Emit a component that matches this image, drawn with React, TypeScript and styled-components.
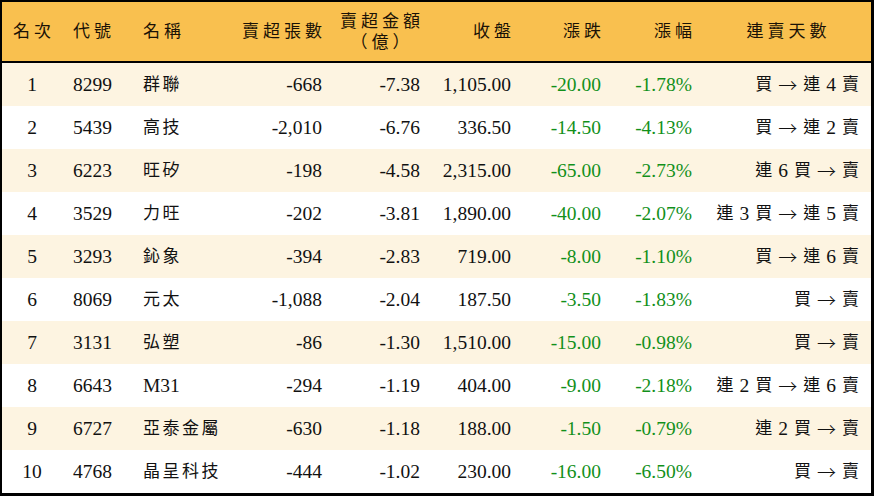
import styled, { createGlobalStyle } from 'styled-components';

const GlobalStyle = createGlobalStyle`
  html, body {
    margin: 0;
    padding: 0;
    background: #fff;
  }
  body {
    font-family: "Liberation Serif", "Noto Sans CJK TC", serif;
  }
`;

type Align = 'left' | 'center' | 'right';

interface Row {
  rank: number;
  code: string;
  name: string;
  lots: string;
  amount: string;
  close: string;
  change: string;
  pct: string;
  streak: string;
}

const rows: Row[] = [
  { rank: 1, code: '8299', name: '群聯', lots: '-668', amount: '-7.38', close: '1,105.00', change: '-20.00', pct: '-1.78%', streak: '買 → 連 4 賣' },
  { rank: 2, code: '5439', name: '高技', lots: '-2,010', amount: '-6.76', close: '336.50', change: '-14.50', pct: '-4.13%', streak: '買 → 連 2 賣' },
  { rank: 3, code: '6223', name: '旺矽', lots: '-198', amount: '-4.58', close: '2,315.00', change: '-65.00', pct: '-2.73%', streak: '連 6 買 → 賣' },
  { rank: 4, code: '3529', name: '力旺', lots: '-202', amount: '-3.81', close: '1,890.00', change: '-40.00', pct: '-2.07%', streak: '連 3 買 → 連 5 賣' },
  { rank: 5, code: '3293', name: '鈊象', lots: '-394', amount: '-2.83', close: '719.00', change: '-8.00', pct: '-1.10%', streak: '買 → 連 6 賣' },
  { rank: 6, code: '8069', name: '元太', lots: '-1,088', amount: '-2.04', close: '187.50', change: '-3.50', pct: '-1.83%', streak: '買 → 賣' },
  { rank: 7, code: '3131', name: '弘塑', lots: '-86', amount: '-1.30', close: '1,510.00', change: '-15.00', pct: '-0.98%', streak: '買 → 賣' },
  { rank: 8, code: '6643', name: 'M31', lots: '-294', amount: '-1.19', close: '404.00', change: '-9.00', pct: '-2.18%', streak: '連 2 買 → 連 6 賣' },
  { rank: 9, code: '6727', name: '亞泰金屬', lots: '-630', amount: '-1.18', close: '188.00', change: '-1.50', pct: '-0.79%', streak: '連 2 買 → 賣' },
  { rank: 10, code: '4768', name: '晶呈科技', lots: '-444', amount: '-1.02', close: '230.00', change: '-16.00', pct: '-6.50%', streak: '買 → 賣' },
];

// widths of each column, the last one takes what is left
const cols: { width?: number; pad: string }[] = [
  { width: 60, pad: '0' },
  { width: 71, pad: '0 0 0 11px' },
  { width: 104, pad: '0 0 0 10px' },
  { width: 95, pad: '0 10px 0 0' },
  { width: 98, pad: '0 10px 0 0' },
  { width: 91, pad: '0 10px 0 0' },
  { width: 90, pad: '0 10px 0 0' },
  { width: 91, pad: '0 10px 0 0' },
  { pad: '0 12px 0 0' },
];

const hasCjk = (s: string) => /[\u4e00-\u9fff]/.test(s);

function StreakCell({ text }: { text: string }) {
  return (
    <Streak>
      {text.split(' ').map((t, i) =>
        t === '→' ? (
          <Arrow key={i}>→</Arrow>
        ) : hasCjk(t) ? (
          <StreakChar key={i}>{t}</StreakChar>
        ) : (
          <StreakNum key={i}>{t}</StreakNum>
        ),
      )}
    </Streak>
  );
}

export default function App() {
  return (
    <>
      <GlobalStyle />
      <Frame>
        <Table>
          <colgroup>
            {cols.map((c, i) => (
              <col key={i} style={c.width ? { width: c.width } : undefined} />
            ))}
          </colgroup>
          <thead>
            <tr>
              <Th $align="center">
                <Cjk>名次</Cjk>
              </Th>
              <Th $align="left" $pad={cols[1].pad}>
                <Cjk>代號</Cjk>
              </Th>
              <Th $align="left" $pad={cols[2].pad}>
                <Cjk>名稱</Cjk>
              </Th>
              <Th $align="right" $pad={cols[3].pad}>
                <Cjk>賣超張數</Cjk>
              </Th>
              <Th $align="right" $pad={cols[4].pad}>
                <TwoLine>
                  <Cjk>賣超金額</Cjk>
                  <Cjk>（億）</Cjk>
                </TwoLine>
              </Th>
              <Th $align="right" $pad={cols[5].pad}>
                <Cjk>收盤</Cjk>
              </Th>
              <Th $align="right" $pad={cols[6].pad}>
                <Cjk>漲跌</Cjk>
              </Th>
              <Th $align="right" $pad={cols[7].pad}>
                <Cjk>漲幅</Cjk>
              </Th>
              <Th $align="center">
                <Cjk>連賣天數</Cjk>
              </Th>
            </tr>
          </thead>
          <tbody>
            {rows.map((r) => (
              <Tr key={r.rank} $odd={r.rank % 2 === 1}>
                <Td $align="center">{r.rank}</Td>
                <Td $align="left" $pad={cols[1].pad}>{r.code}</Td>
                <Td $align="left" $pad={cols[2].pad}>
                  {hasCjk(r.name) ? <Name>{r.name}</Name> : r.name}
                </Td>
                <Td $align="right" $pad={cols[3].pad}>{r.lots}</Td>
                <Td $align="right" $pad={cols[4].pad}>{r.amount}</Td>
                <Td $align="right" $pad={cols[5].pad}>{r.close}</Td>
                <Td $align="right" $pad={cols[6].pad} $green>{r.change}</Td>
                <Td $align="right" $pad={cols[7].pad} $green>{r.pct}</Td>
                <Td $align="right" $pad={cols[8].pad}>
                  <StreakCell text={r.streak} />
                </Td>
              </Tr>
            ))}
          </tbody>
        </Table>
      </Frame>
    </>
  );
}

const Frame = styled.div`
  width: 874px;
  height: 496px;
  box-sizing: border-box;
  border-style: solid;
  border-color: #000;
  border-width: 2px 3px 3px 2px;
  background: #fff;
  overflow: hidden;
`;

const Table = styled.table`
  width: 100%;
  border-collapse: collapse;
  table-layout: fixed;
  color: #111;
  font-family: "Liberation Serif", "Noto Sans CJK TC", serif;
`;

const Th = styled.th<{ $align: Align; $pad?: string }>`
  height: 59px;
  padding: ${(p) => p.$pad || '0'};
  background: #f9c04f;
  border-bottom: 2px solid #000;
  text-align: ${(p) => p.$align};
  vertical-align: middle;
  white-space: nowrap;
  font-weight: normal;
  font-size: 17px;
  line-height: 21px;
  color: #1a1206;
`;

const Cjk = styled.span`
  display: inline-block;
  letter-spacing: 4px;
  margin-right: -4px;
`;

const TwoLine = styled.span`
  display: inline-flex;
  flex-direction: column;
  align-items: center;
  margin-top: -2px;
`;

const Tr = styled.tr<{ $odd: boolean }>`
  background: ${(p) => (p.$odd ? '#fdf4e1' : '#fff')};
`;

const Td = styled.td<{ $align: Align; $pad?: string; $green?: boolean }>`
  height: 43px;
  padding: ${(p) => p.$pad || '0'};
  text-align: ${(p) => p.$align};
  vertical-align: middle;
  font-size: 19.5px;
  line-height: 22px;
  white-space: nowrap;
  color: ${(p) => (p.$green ? '#12901a' : '#111')};
`;

const Name = styled.span`
  font-size: 17px;
  letter-spacing: 2.5px;
`;

const Streak = styled.span`
  display: inline-flex;
  align-items: center;
  gap: 6px;
  vertical-align: middle;
`;

const StreakChar = styled.span`
  font-size: 17px;
  line-height: 22px;
`;

const StreakNum = styled.span`
  font-size: 19.5px;
  line-height: 22px;
`;

const Arrow = styled.span`
  font-family: "Noto Sans CJK TC", sans-serif;
  font-weight: 300;
  font-size: 19px;
  line-height: 22px;
`;
